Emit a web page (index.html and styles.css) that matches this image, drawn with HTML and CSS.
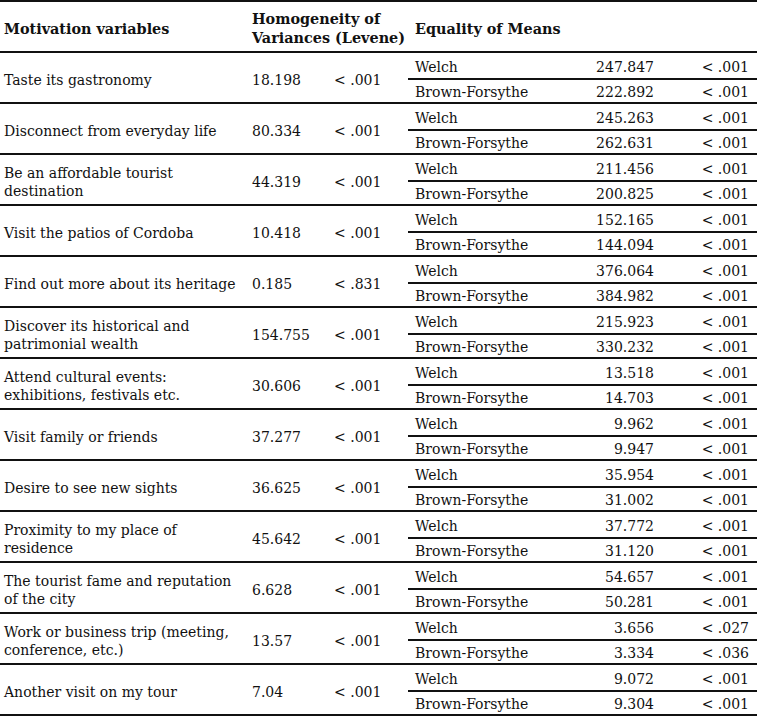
FILE: index.html
```html
<!DOCTYPE html>
<html>
<head>
<meta charset="utf-8">
<link rel="stylesheet" href="styles.css">
</head>
<body>
<div class="table">
  <div class="head">
    <div class="h c1">Motivation variables</div>
    <div class="h c2">Homogeneity of<br>Variances (Levene)</div>
    <div class="h c4">Equality of Means</div>
  </div>

  <div class="group">
    <div class="var">Taste its gastronomy</div>
    <div class="stat">18.198</div>
    <div class="p">&lt; .001</div>
    <div class="tests">
      <div class="test welch"><span>Welch</span><span class="num">247.847</span><span class="num">&lt; .001</span></div>
      <div class="test bf"><span>Brown-Forsythe</span><span class="num">222.892</span><span class="num">&lt; .001</span></div>
    </div>
  </div>

  <div class="group">
    <div class="var">Disconnect from everyday life</div>
    <div class="stat">80.334</div>
    <div class="p">&lt; .001</div>
    <div class="tests">
      <div class="test welch"><span>Welch</span><span class="num">245.263</span><span class="num">&lt; .001</span></div>
      <div class="test bf"><span>Brown-Forsythe</span><span class="num">262.631</span><span class="num">&lt; .001</span></div>
    </div>
  </div>

  <div class="group">
    <div class="var">Be an affordable tourist<br>destination</div>
    <div class="stat">44.319</div>
    <div class="p">&lt; .001</div>
    <div class="tests">
      <div class="test welch"><span>Welch</span><span class="num">211.456</span><span class="num">&lt; .001</span></div>
      <div class="test bf"><span>Brown-Forsythe</span><span class="num">200.825</span><span class="num">&lt; .001</span></div>
    </div>
  </div>

  <div class="group">
    <div class="var">Visit the patios of Cordoba</div>
    <div class="stat">10.418</div>
    <div class="p">&lt; .001</div>
    <div class="tests">
      <div class="test welch"><span>Welch</span><span class="num">152.165</span><span class="num">&lt; .001</span></div>
      <div class="test bf"><span>Brown-Forsythe</span><span class="num">144.094</span><span class="num">&lt; .001</span></div>
    </div>
  </div>

  <div class="group">
    <div class="var">Find out more about its heritage</div>
    <div class="stat">0.185</div>
    <div class="p">&lt; .831</div>
    <div class="tests">
      <div class="test welch"><span>Welch</span><span class="num">376.064</span><span class="num">&lt; .001</span></div>
      <div class="test bf"><span>Brown-Forsythe</span><span class="num">384.982</span><span class="num">&lt; .001</span></div>
    </div>
  </div>

  <div class="group">
    <div class="var">Discover its historical and<br>patrimonial wealth</div>
    <div class="stat">154.755</div>
    <div class="p">&lt; .001</div>
    <div class="tests">
      <div class="test welch"><span>Welch</span><span class="num">215.923</span><span class="num">&lt; .001</span></div>
      <div class="test bf"><span>Brown-Forsythe</span><span class="num">330.232</span><span class="num">&lt; .001</span></div>
    </div>
  </div>

  <div class="group">
    <div class="var">Attend cultural events:<br>exhibitions, festivals etc.</div>
    <div class="stat">30.606</div>
    <div class="p">&lt; .001</div>
    <div class="tests">
      <div class="test welch"><span>Welch</span><span class="num">13.518</span><span class="num">&lt; .001</span></div>
      <div class="test bf"><span>Brown-Forsythe</span><span class="num">14.703</span><span class="num">&lt; .001</span></div>
    </div>
  </div>

  <div class="group">
    <div class="var">Visit family or friends</div>
    <div class="stat">37.277</div>
    <div class="p">&lt; .001</div>
    <div class="tests">
      <div class="test welch"><span>Welch</span><span class="num">9.962</span><span class="num">&lt; .001</span></div>
      <div class="test bf"><span>Brown-Forsythe</span><span class="num">9.947</span><span class="num">&lt; .001</span></div>
    </div>
  </div>

  <div class="group">
    <div class="var">Desire to see new sights</div>
    <div class="stat">36.625</div>
    <div class="p">&lt; .001</div>
    <div class="tests">
      <div class="test welch"><span>Welch</span><span class="num">35.954</span><span class="num">&lt; .001</span></div>
      <div class="test bf"><span>Brown-Forsythe</span><span class="num">31.002</span><span class="num">&lt; .001</span></div>
    </div>
  </div>

  <div class="group">
    <div class="var">Proximity to my place of<br>residence</div>
    <div class="stat">45.642</div>
    <div class="p">&lt; .001</div>
    <div class="tests">
      <div class="test welch"><span>Welch</span><span class="num">37.772</span><span class="num">&lt; .001</span></div>
      <div class="test bf"><span>Brown-Forsythe</span><span class="num">31.120</span><span class="num">&lt; .001</span></div>
    </div>
  </div>

  <div class="group">
    <div class="var">The tourist fame and reputation<br>of the city</div>
    <div class="stat">6.628</div>
    <div class="p">&lt; .001</div>
    <div class="tests">
      <div class="test welch"><span>Welch</span><span class="num">54.657</span><span class="num">&lt; .001</span></div>
      <div class="test bf"><span>Brown-Forsythe</span><span class="num">50.281</span><span class="num">&lt; .001</span></div>
    </div>
  </div>

  <div class="group">
    <div class="var">Work or business trip (meeting,<br>conference, etc.)</div>
    <div class="stat">13.57</div>
    <div class="p">&lt; .001</div>
    <div class="tests">
      <div class="test welch"><span>Welch</span><span class="num">3.656</span><span class="num">&lt; .027</span></div>
      <div class="test bf"><span>Brown-Forsythe</span><span class="num">3.334</span><span class="num">&lt; .036</span></div>
    </div>
  </div>

  <div class="group">
    <div class="var">Another visit on my tour</div>
    <div class="stat">7.04</div>
    <div class="p">&lt; .001</div>
    <div class="tests">
      <div class="test welch"><span>Welch</span><span class="num">9.072</span><span class="num">&lt; .001</span></div>
      <div class="test bf"><span>Brown-Forsythe</span><span class="num">9.304</span><span class="num">&lt; .001</span></div>
    </div>
  </div>
</div>
</body>
</html>
```

FILE: styles.css
```css
html, body {
  margin: 0;
  padding: 0;
  background: #fff;
}

body {
  font-family: "DejaVu Serif", "Liberation Serif", serif;
  font-size: 14px;
  color: #111;
  width: 757px;
}

*, *::before, *::after {
  box-sizing: border-box;
}

.table {
  width: 757px;
  border-top: 2px solid #111;
}

.head {
  display: grid;
  grid-template-columns: 248px 160px 1fr;
  height: 51px;
  padding-top: 3px;
  border-bottom: 2px solid #111;
  align-items: center;
}

.h {
  font-weight: bold;
  font-size: 14.4px;
  line-height: 19px;
}

.c1 { padding-left: 4px; }
.c2 { padding-left: 4px; }
.c4 { padding-left: 7px; }

.group {
  display: grid;
  grid-template-columns: 248px 82px 78px 1fr;
  height: 51px;
  border-bottom: 2px solid #111;
  align-items: center;
}

.var,
.stat,
.p {
  padding-left: 4px;
  padding-top: 4px;
  line-height: 18px;
}

.tests {
  display: flex;
  flex-direction: column;
  height: 49px;
}

.test {
  display: grid;
  grid-template-columns: 1fr 110px 95px;
  padding: 3px 8px 0 7px;
  align-items: center;
}

.welch {
  height: 27px;
  border-bottom: 2px solid #111;
}

.bf {
  height: 22px;
  padding-top: 1px;
}

.num {
  text-align: right;
}
```
